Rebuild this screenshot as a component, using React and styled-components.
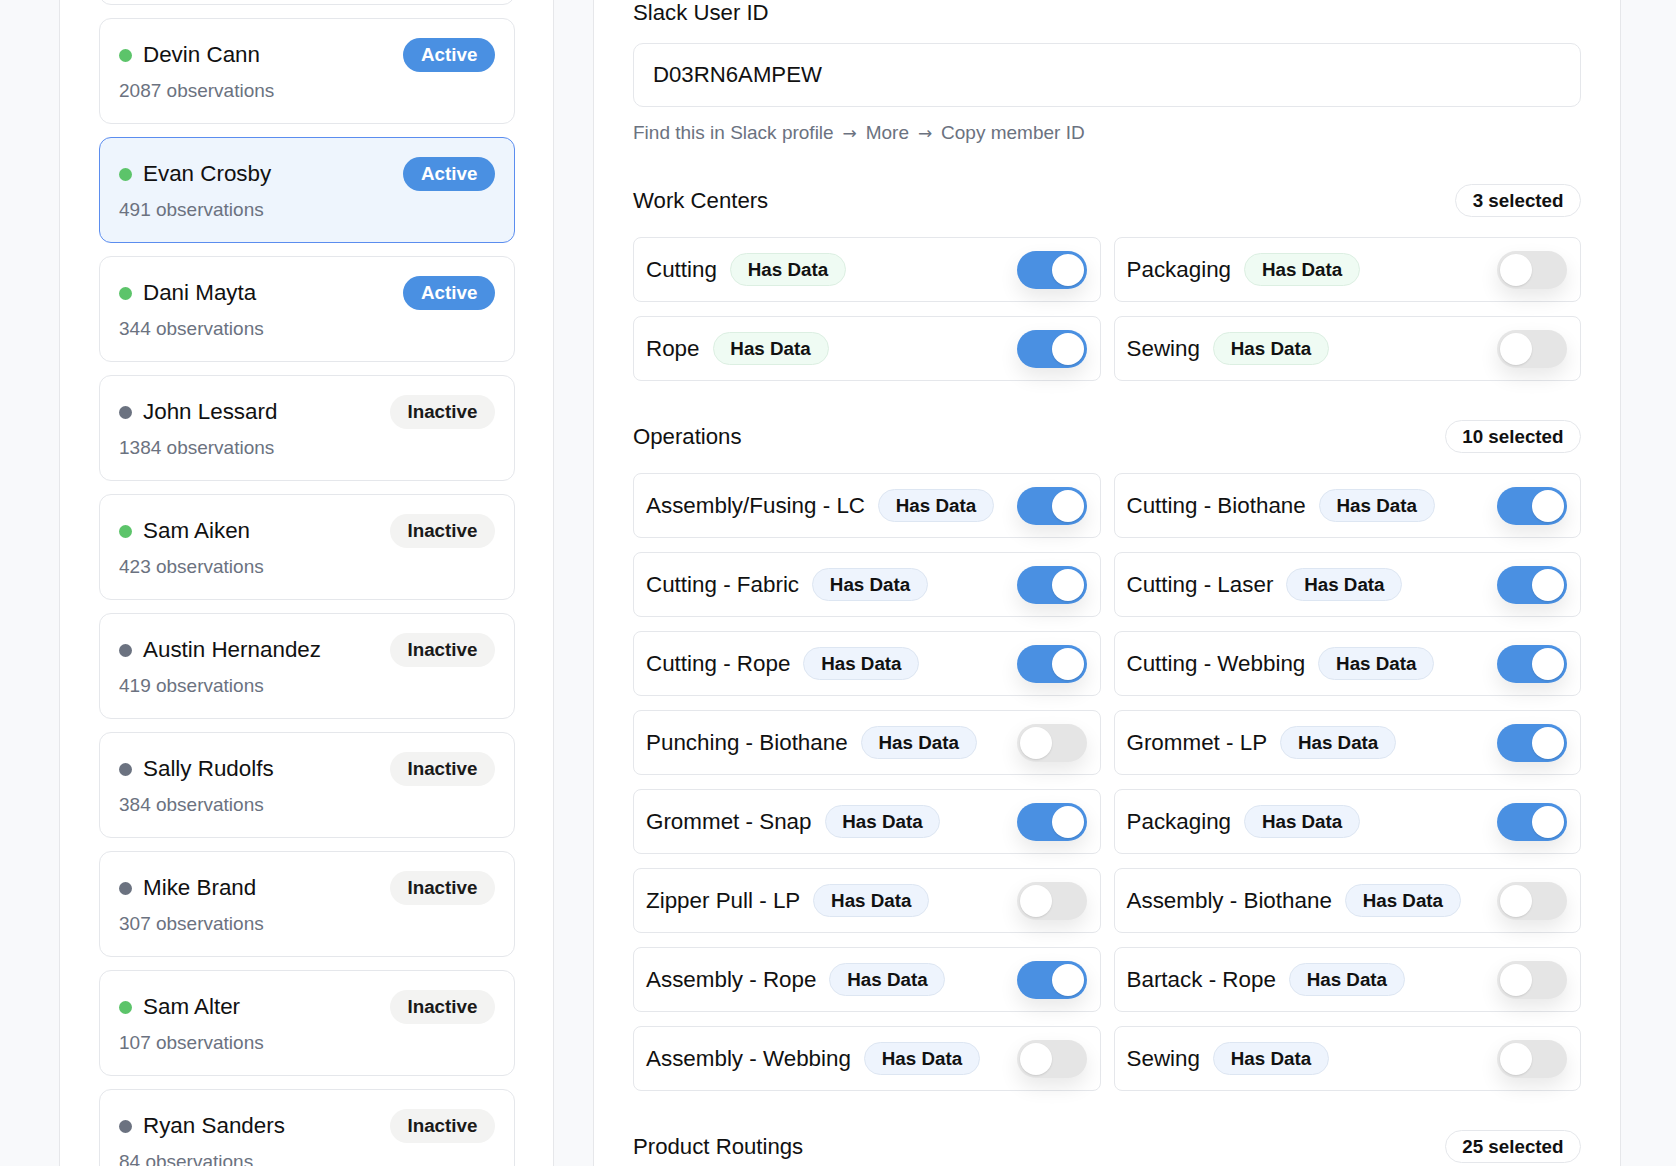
import React from "react";
import styled, { createGlobalStyle } from "styled-components";

const GlobalStyle = createGlobalStyle`
  * { box-sizing: border-box; }
  html, body {
    margin: 0;
    padding: 0;
    height: 100%;
    overflow: hidden;
    background: #f8f9fb;
  }
  body {
    font-family: "Liberation Sans", Arial, Helvetica, sans-serif;
    color: #111;
  }
`;

const Page = styled.div`
  display: flex;
  gap: 39px;
  padding-left: 59px;
  height: 100vh;
`;

const Sidebar = styled.aside`
  flex: none;
  width: 495px;
  height: 100%;
  background: #fff;
  border-left: 1px solid #e6e7ea;
  border-right: 1px solid #e6e7ea;
  padding: 0 38px 0 39px;
  overflow: hidden;
`;

const UserList = styled.div`
  display: flex;
  flex-direction: column;
  gap: 13px;
  margin-top: -101px;
`;

const UserCard = styled.div`
  flex: none;
  height: 106px;
  border: 1px solid ${(p) => (p.$selected ? "#5b8def" : "#e5e7eb")};
  background: ${(p) => (p.$selected ? "#eef5fd" : "#fff")};
  border-radius: 12px;
  padding: 19px;
  display: flex;
  flex-direction: column;
  gap: 6px;
`;

const UserRow = styled.div`
  display: flex;
  align-items: center;
  height: 34px;
`;

const Dot = styled.span`
  flex: none;
  width: 13px;
  height: 13px;
  border-radius: 50%;
  margin-right: 11px;
  background: ${(p) => (p.$online ? "#5cc46a" : "#6b7280")};
`;

const UserName = styled.span`
  flex: 1;
  font-size: 22.4px;
  color: #111;
  white-space: nowrap;
`;

const StatusBadge = styled.span`
  flex: none;
  height: 34px;
  padding: 0 17.6px;
  border-radius: 17px;
  display: inline-flex;
  align-items: center;
  font-weight: 700;
  font-size: 18.8px;
  background: ${(p) => (p.$active ? "#4a90e2" : "#f3f3f2")};
  color: ${(p) => (p.$active ? "#fff" : "#1a1a1a")};
`;

const ObsCount = styled.div`
  font-size: 19px;
  line-height: 26px;
  color: #6b7280;
`;

const Main = styled.main`
  flex: none;
  width: 1028px;
  height: 100%;
  background: #fff;
  border-left: 1px solid #e6e7ea;
  border-right: 1px solid #e6e7ea;
  padding: 0 39px;
  overflow: hidden;
`;

const FieldLabel = styled.label`
  display: block;
  font-size: 22.2px;
  line-height: 26px;
  color: #111;
  margin-bottom: 17px;
`;

const TextInput = styled.input`
  display: block;
  width: 100%;
  height: 64px;
  border: 1px solid #e5e7eb;
  border-radius: 10px;
  padding: 0 19px;
  font-family: inherit;
  font-size: 22.2px;
  color: #111;
  background: #fff;
  outline: none;
`;

const Hint = styled.p`
  margin: 13px 0 0;
  font-size: 19px;
  line-height: 26px;
  color: #6b7280;
`;

const Arrow = styled.span`
  font-family: "DejaVu Sans", sans-serif;
  font-size: 17px;
  margin: 0 3.5px;
`;

const Section = styled.section`
  margin-top: ${(p) => p.$gap || 39}px;
`;

const SectionHeader = styled.div`
  display: flex;
  align-items: center;
  justify-content: space-between;
  height: 33px;
  margin-bottom: 20px;
`;

const SectionTitle = styled.h3`
  margin: 0;
  font-weight: 400;
  font-size: 22.2px;
  color: #111;
`;

const CountPill = styled.span`
  height: 33px;
  border: 1px solid #e5e7eb;
  border-radius: 17px;
  padding: 0 16.5px;
  display: inline-flex;
  align-items: center;
  font-weight: 700;
  font-size: 18.8px;
  color: #111;
  background: #fff;
`;

const OptionGrid = styled.div`
  display: grid;
  grid-template-columns: 1fr 1fr;
  column-gap: 13px;
  row-gap: 14px;
`;

const OptionCard = styled.div`
  height: 65px;
  border: 1px solid #e5e7eb;
  border-radius: 8px;
  display: flex;
  align-items: center;
  padding: 0 13px 0 12px;
  background: #fff;
`;

const OptionName = styled.span`
  font-size: 22.4px;
  color: #111;
  white-space: nowrap;
`;

const DataBadge = styled.span`
  flex: none;
  margin-left: 13px;
  height: 33px;
  padding: 0 16.8px;
  border-radius: 17px;
  border: 1px solid ${(p) => (p.$tone === "green" ? "#dcefe2" : "#dde6f2")};
  background: ${(p) => (p.$tone === "green" ? "#effbf3" : "#eef4fd")};
  display: inline-flex;
  align-items: center;
  font-weight: 700;
  font-size: 18.8px;
  color: #111;
`;

const Track = styled.span`
  flex: none;
  margin-left: auto;
  width: 70px;
  height: 38px;
  border-radius: 19px;
  padding: 3px;
  display: flex;
  justify-content: ${(p) => (p.$on ? "flex-end" : "flex-start")};
  background: ${(p) => (p.$on ? "#4a90e2" : "#e5e5e5")};
  box-shadow: 0 9px 20px rgba(0, 0, 0, 0.09);
`;

const Knob = styled.span`
  width: 32px;
  height: 32px;
  border-radius: 50%;
  background: #fff;
  box-shadow: 0 1px 2px rgba(0, 0, 0, 0.12);
`;

const users = [
  { name: "Devin Cann", obs: 2087, online: true, active: true },
  { name: "Evan Crosby", obs: 491, online: true, active: true, selected: true },
  { name: "Dani Mayta", obs: 344, online: true, active: true },
  { name: "John Lessard", obs: 1384, online: false, active: false },
  { name: "Sam Aiken", obs: 423, online: true, active: false },
  { name: "Austin Hernandez", obs: 419, online: false, active: false },
  { name: "Sally Rudolfs", obs: 384, online: false, active: false },
  { name: "Mike Brand", obs: 307, online: false, active: false },
  { name: "Sam Alter", obs: 107, online: true, active: false },
  { name: "Ryan Sanders", obs: 84, online: false, active: false },
];

const workCenters = [
  ["Cutting", true],
  ["Packaging", false],
  ["Rope", true],
  ["Sewing", false],
];

const operations = [
  ["Assembly/Fusing - LC", true],
  ["Cutting - Biothane", true],
  ["Cutting - Fabric", true],
  ["Cutting - Laser", true],
  ["Cutting - Rope", true],
  ["Cutting - Webbing", true],
  ["Punching - Biothane", false],
  ["Grommet - LP", true],
  ["Grommet - Snap", true],
  ["Packaging", true],
  ["Zipper Pull - LP", false],
  ["Assembly - Biothane", false],
  ["Assembly - Rope", true],
  ["Bartack - Rope", false],
  ["Assembly - Webbing", false],
  ["Sewing", false],
];

function Toggle({ on }) {
  return (
    <Track $on={on} role="switch" aria-checked={on}>
      <Knob />
    </Track>
  );
}

function OptionSection({ title, count, items, tone, gap }) {
  return (
    <Section $gap={gap}>
      <SectionHeader>
        <SectionTitle>{title}</SectionTitle>
        <CountPill>{count} selected</CountPill>
      </SectionHeader>
      {items && (
        <OptionGrid>
          {items.map(([name, on], i) => (
            <OptionCard key={i}>
              <OptionName>{name}</OptionName>
              <DataBadge $tone={tone}>Has Data</DataBadge>
              <Toggle on={on} />
            </OptionCard>
          ))}
        </OptionGrid>
      )}
    </Section>
  );
}

export default function App() {
  return (
    <>
      <GlobalStyle />
      <Page>
        <Sidebar>
          <UserList>
            {/* card scrolled out of view above; only its lower edge shows */}
            <UserCard aria-hidden="true" />
            {users.map((u) => (
              <UserCard key={u.name} $selected={u.selected}>
                <UserRow>
                  <Dot $online={u.online} />
                  <UserName>{u.name}</UserName>
                  <StatusBadge $active={u.active}>
                    {u.active ? "Active" : "Inactive"}
                  </StatusBadge>
                </UserRow>
                <ObsCount>{u.obs} observations</ObsCount>
              </UserCard>
            ))}
          </UserList>
        </Sidebar>
        <Main>
          <FieldLabel>Slack User ID</FieldLabel>
          <TextInput defaultValue="D03RN6AMPEW" />
          <Hint>
            Find this in Slack profile<Arrow> → </Arrow>More<Arrow> → </Arrow>
            Copy member ID
          </Hint>
          <OptionSection
            title="Work Centers"
            count={3}
            items={workCenters}
            tone="green"
            gap={38}
          />
          <OptionSection
            title="Operations"
            count={10}
            items={operations}
            tone="blue"
          />
          <OptionSection title="Product Routings" count={25} />
        </Main>
      </Page>
    </>
  );
}
